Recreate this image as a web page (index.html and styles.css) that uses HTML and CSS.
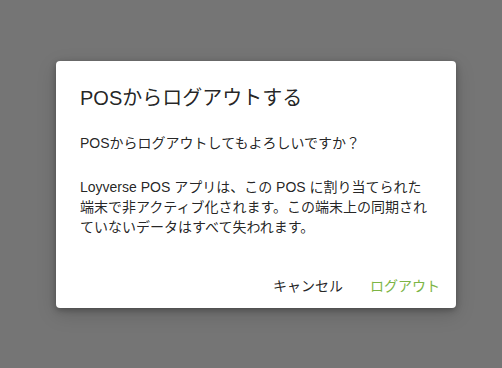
FILE: index.html
```html
<!DOCTYPE html>
<html lang="ja">
<head>
<meta charset="utf-8">
<link rel="stylesheet" href="styles.css">
</head>
<body>
<div class="overlay">
  <div class="dialog">
    <h2 class="title">POSからログアウトする</h2>
    <div class="content">
      <p class="text">POSからログアウトしてもよろしいですか？</p>
      <p class="text">Loyverse POS アプリは、この POS に割り当てられた端末で非アクティブ化されます。この端末上の同期されていないデータはすべて失われます。</p>
    </div>
    <div class="actions">
      <button class="btn">キャンセル</button>
      <button class="btn primary">ログアウト</button>
    </div>
  </div>
</div>
</body>
</html>
```
FILE: styles.css
```css
html, body {
  margin: 0;
  padding: 0;
  height: 100%;
}
body {
  font-family: "Liberation Sans", Arial, "Noto Sans CJK JP", sans-serif;
  color: rgba(0,0,0,0.87);
}
.overlay {
  height: 100%;
  box-sizing: border-box;
  padding-left: 10px;
  background: #757575;
  display: flex;
  align-items: center;
  justify-content: center;
}
.dialog {
  width: 400px;
  background: #fff;
  border-radius: 4px;
  box-shadow: 0 2px 6px rgba(0,0,0,0.3), 0 6px 20px rgba(0,0,0,0.15);
  box-sizing: border-box;
}
.title {
  margin: 0;
  padding: 23px 24px 21px;
  font-size: 20px;
  font-weight: 400;
  line-height: 28px;
}
.content {
  padding: 0 24px 22px;
}
.text {
  margin: 0 0 24px;
  font-size: 14px;
  line-height: 20px;
}
.text:last-child {
  margin-bottom: 0;
}
.actions {
  display: flex;
  justify-content: flex-end;
  padding: 8px 8px 5px;
  gap: 11px;
}
.btn {
  font-family: inherit;
  font-size: 14px;
  background: none;
  border: none;
  height: 36px;
  padding: 0 8px;
  min-width: 64px;
  color: rgba(0,0,0,0.87);
  cursor: pointer;
}
.btn.primary {
  color: #7db545;
}
```
